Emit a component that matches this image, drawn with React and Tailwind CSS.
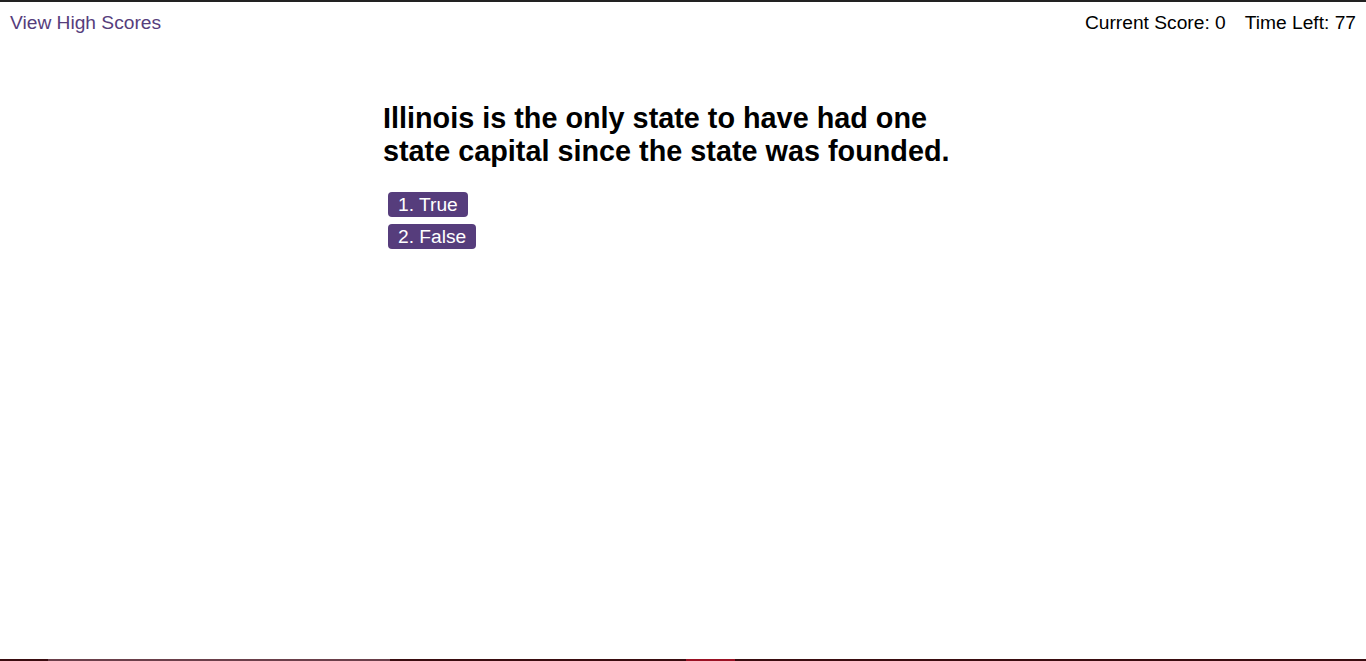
import React from 'react';

const choices = ['1. True', '2. False'];

export default function App() {
    return (
        <div className="relative h-[661px] w-full overflow-hidden bg-white font-['Liberation_Sans',Arial,sans-serif] text-black">
            {/* top edge of window */}
            <div className="h-[2px] w-full bg-[#222]"></div>

            <header className="flex items-center justify-between px-[10px] pt-[10px] text-[19.2px] leading-[22px]">
                <a href="#" className="text-[#563d7c]">View High Scores</a>
                <div className="flex gap-[19px]">
                    <span>Current Score: 0</span>
                    <span>Time Left: 77</span>
                </div>
            </header>

            <main className="mx-auto mt-[68px] w-[600px]">
                <h2 className="text-[28.8px] font-bold leading-[33px]">
                    Illinois is the only state to have had one state capital since the state was founded.
                </h2>
                <div className="mt-[24px] flex flex-col items-start gap-[7px] pl-[5px]">
                    {choices.map((c) => (
                        <button
                            key={c}
                            className="h-[25px] rounded-[4px] bg-[#563d7c] px-[10px] text-[19.2px] leading-[25px] text-white"
                        >
                            {c}
                        </button>
                    ))}
                </div>
            </main>

            {/* bottom edge / taskbar strip */}
            <div className="absolute bottom-0 left-0 flex h-[2px] w-full bg-[#3a0c10]">
                <div className="ml-[48px] w-[342px] bg-[#6b3f4a]"></div>
                <div className="ml-[296px] w-[49px] bg-[#9b1224]"></div>
            </div>
        </div>
    );
}
